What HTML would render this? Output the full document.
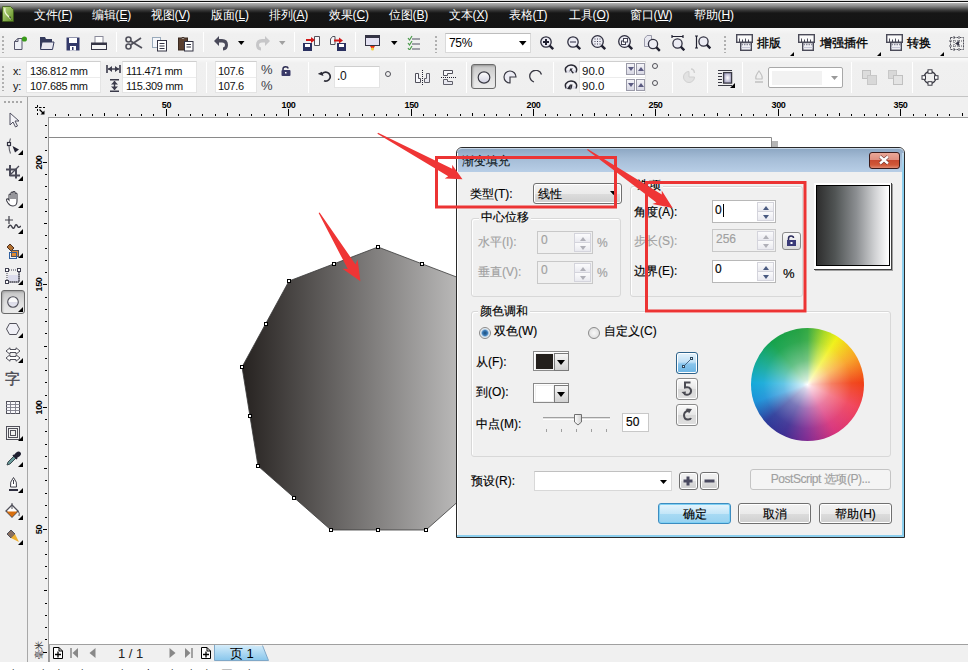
<!DOCTYPE html>
<html><head><meta charset="utf-8">
<style>
*{margin:0;padding:0;box-sizing:border-box}
html,body{width:968px;height:670px;overflow:hidden;background:#fff;font-family:"Liberation Sans",sans-serif;font-size:12px;color:#000}
.a{position:absolute}
#menubar{left:0;top:0;width:968px;height:28px;background:linear-gradient(#e0e0e0 0,#e0e0e0 1px,#101010 1px,#101010 2px,#f8f8f8 2px,#f8f8f8 3px,#b4b4b4 3px,#8a8a8a 6px,#3c3c3c 10px,#161616 13px,#141414 28px)}
.mi u{text-decoration:underline;text-underline-offset:1px}
.mi{top:8px;color:#fff;font-size:12px;line-height:14px;white-space:nowrap;letter-spacing:-0.2px}
#tb1{left:0;top:28px;width:968px;height:30px;background:linear-gradient(#f8f8f8,#f0f0f0 6px,#efefef);border-bottom:1px solid #d0d0d0}
#pb{left:0;top:58px;width:968px;height:39px;background:linear-gradient(#fafafa,#f0f0f0 5px,#efefef);border-bottom:1px solid #c4c4c4}
.sep{width:1px;background:#c8c8c8;border-right:1px solid #fff}
.inp{background:#fff;border:1px solid #e2e3e4;font-size:12px;line-height:14px;padding-left:3px;white-space:nowrap}
#toolbox{left:0;top:97px;width:28px;height:565px;background:#f0f0f0;border-right:1px solid #a8a8a8}
#hruler{left:28px;top:97px;width:940px;height:21px;background:#f0f0f0;background-image:linear-gradient(#9a9a9a,#9a9a9a);background-size:920px 1px;background-position:20px 20px;background-repeat:no-repeat}
#vruler{left:28px;top:118px;width:21px;height:544px;background:#f0f0f0;border-right:1px solid #9a9a9a}
#canvas{left:49px;top:118px;width:919px;height:527px;background:#fff}
#nav{left:49px;top:644px;width:919px;height:18px;background:#f0f0f0;border-top:1px solid #a0a0a0;border-left:1px solid #a0a0a0}
#dlg{left:456px;top:147px;width:449px;height:391px;border:1px solid #2a2a2a;border-radius:6px 6px 0 0;background:#f0f0f0;overflow:hidden}
.grip{width:2px;height:19px;background:repeating-linear-gradient(transparent 0,transparent 2px,#b0b0b0 2px,#b0b0b0 4px)}
.tbt{top:8px;font-size:12px;line-height:15px;white-space:nowrap;-webkit-text-stroke:0.35px #000}
.tri{top:24px;width:0;height:0;border-left:4px solid transparent;border-bottom:4px solid #000}
.pt{font-size:11px;line-height:13px;white-space:nowrap;color:#111;letter-spacing:-0.35px}
.ibox{background:#fff;border:1px solid #e4e4e4;border-top-color:#cfcfcf;background-image:linear-gradient(transparent 15px,#ececec 15px,#ececec 16px,transparent 16px)}
.deg{width:6px;height:6px;border:1.3px solid #505058;border-radius:50%}
.spb{width:9px;height:12px;border:1px solid #9a9aa8;background:linear-gradient(#f4f4f8,#d8d8e4)}
.spb i{position:absolute;left:1px;width:0;height:0;border-left:3.5px solid transparent;border-right:3.5px solid transparent}
.spb i.dn{top:3px;border-top:4px solid #5a5a80}
.spb i.up{top:3px;border-bottom:4px solid #5a5a80}
.tbtri{width:0;height:0;border-left:5px solid transparent;border-bottom:5px solid #000}
.dt{font-size:12px;line-height:15px;white-space:nowrap;color:#000;-webkit-text-stroke:0.15px currentColor}
.dis{color:#a0a0a0}
.gt{background:#f0f0f0;padding:0 2px}
.grp{border:1px solid #d8d8d8;border-radius:3px;box-shadow:inset 1px 1px 0 #fff}
.wbtn{border:1px solid #707070;border-radius:3px;background:linear-gradient(#f2f2f2,#ebebeb 50%,#dddddd 51%,#cfcfcf);box-shadow:inset 0 0 0 1px #fff}
.sp{background:#fff;border:1px solid #b8b8b8}
.sp.dsb{background:#f0f0f0;border-color:#c8c8c8}
.sbu,.sbd{right:1px;width:17px;height:10px;border:1px solid #d4d4dc;background:linear-gradient(#fbfbfc,#eaeaf0)}
.sbu{top:1px}.sbd{top:10px}
.sbu:after,.sbd:after{content:"";position:absolute;left:4.5px;top:2.5px;border-left:3.5px solid transparent;border-right:3.5px solid transparent}
.sbu:after{border-bottom:4px solid #4a5a80}
.sbd:after{border-top:4px solid #4a5a80}
.dsb .sbu:after{border-bottom-color:#b0b0b8}.dsb .sbd:after{border-top-color:#b0b0b8}
.radio{width:12px;height:12px;border-radius:50%;border:1px solid #8a8a8a;background:radial-gradient(#f8f8f8,#d8d8d8)}
.radio.on{background:radial-gradient(circle,#1e4e78 0,#3a7ab8 2.5px,#d4e4f0 4px,#f0f0f0 5px)}
.cbtn{width:36px;height:20px;border:1px solid #8a8a8a;background:#f0f0f0;box-shadow:inset 1px 1px 0 #fff}
.cbtn:after{content:"";position:absolute;left:20px;top:1px;width:13px;height:16px;border:1px solid #7a7a7a;background:linear-gradient(#f6f6f6,#d2d2d2)}
.cbtn:before{content:"";position:absolute;z-index:2;left:23px;top:8px;border-left:4px solid transparent;border-right:4px solid transparent;border-top:5px solid #000}
.ibt{width:22px;height:22px;border:1px solid #8a8a8a;border-radius:3px;background:linear-gradient(#fafafa,#e6e6e6 50%,#d8d8d8 51%,#e0e0e0);box-shadow:inset 0 0 0 1px #fff}
.ibt.sel{border-color:#2c628b;background:linear-gradient(#e4f2fb,#c0e0f6 45%,#88c4ec 55%,#6ab4e4)}
</style></head><body>
<div id="menubar" class="a">
  <svg class="a" style="left:2px;top:6px" width="12" height="16" viewBox="0 0 12 16"><defs><linearGradient id="lg" x1="0" y1="0" x2="1" y2="1"><stop offset="0" stop-color="#c4e08c"/><stop offset="1" stop-color="#5c8c20"/></linearGradient></defs><path d="M0.5 0.5H8.5L11.5 3.5V15.5H0.5Z" fill="url(#lg)" stroke="#3c5a18" stroke-width=".8"/><path d="M3 2Q2 6 5 9L9 13" fill="none" stroke="#eef6d8" stroke-width="1.4"/><path d="M7 11L10 14L8 10Z" fill="#203010"/></svg>
  <div class="a mi" style="left:34px">文件(<u>F</u>)</div>
  <div class="a mi" style="left:92px">编辑(<u>E</u>)</div>
  <div class="a mi" style="left:151px">视图(<u>V</u>)</div>
  <div class="a mi" style="left:211px">版面(<u>L</u>)</div>
  <div class="a mi" style="left:269px">排列(<u>A</u>)</div>
  <div class="a mi" style="left:329px">效果(<u>C</u>)</div>
  <div class="a mi" style="left:389px">位图(<u>B</u>)</div>
  <div class="a mi" style="left:449px">文本(<u>X</u>)</div>
  <div class="a mi" style="left:509px">表格(<u>T</u>)</div>
  <div class="a mi" style="left:569px">工具(<u>O</u>)</div>
  <div class="a mi" style="left:630px">窗口(<u>W</u>)</div>
  <div class="a mi" style="left:694px">帮助(<u>H</u>)</div>
</div>
<div id="tb1" class="a">
<div class="a grip" style="left:2px;top:6px"></div>
<svg class="a" style="left:12px;top:8px" width="16" height="15" viewBox="0 0 16 15"><path d="M2.5 5.5 L6 2.5 H10 V13.5 H2.5 Z" fill="#eef0f6" stroke="#55556a"/><path d="M2.5 5.5 H6 V2.5" fill="none" stroke="#55556a"/><circle cx="12.4" cy="3" r="2.6" fill="#3a9a1a"/></svg>
<svg class="a" style="left:39px;top:8px" width="16" height="15" viewBox="0 0 16 15"><path d="M1 1 H6 L7 3 H13 V13 H1 Z" fill="#343a5c"/><path d="M1.5 13.5 L3 6 H15 L13.5 13.5 Z" fill="#e8e8f0" stroke="#343a5c"/></svg>
<svg class="a" style="left:66px;top:9px" width="14" height="14" viewBox="0 0 14 14"><rect x="0.5" y="0.5" width="13" height="13" fill="#343a6a"/><rect x="3" y="1" width="8" height="5" fill="#fff"/><rect x="4" y="9" width="6" height="4.5" fill="#fff"/><rect x="6" y="10" width="1.5" height="3" fill="#343a6a"/></svg>
<svg class="a" style="left:91px;top:8px" width="16" height="15" viewBox="0 0 16 15"><rect x="4" y="0.5" width="8" height="7" fill="#fff" stroke="#8a8a9a"/><rect x="0.5" y="7" width="15" height="6.5" fill="#f4f4f4" stroke="#343444"/><rect x="1" y="7" width="14" height="2" fill="#343444"/></svg>
<div class="a sep" style="left:116px;top:4px;height:20px"></div>
<svg class="a" style="left:125px;top:8px" width="18" height="14" viewBox="0 0 18 14"><circle cx="3.5" cy="3.5" r="2.5" fill="none" stroke="#50505a" stroke-width="1.6"/><circle cx="3.5" cy="10.5" r="2.5" fill="none" stroke="#50505a" stroke-width="1.6"/><path d="M5.5 5 L17 12 M5.5 9 L16 2" stroke="#50505a" stroke-width="1.8"/></svg>
<svg class="a" style="left:152px;top:9px" width="16" height="15" viewBox="0 0 16 15"><rect x="0.5" y="0.5" width="8" height="10" fill="#f4f6fa" stroke="#9ab"/><rect x="5.5" y="3.5" width="9" height="10.5" fill="#fff" stroke="#343444"/><path d="M7.5 6.5H12.5M7.5 9H12.5M7.5 11.5H12.5" stroke="#343444"/></svg>
<svg class="a" style="left:178px;top:8px" width="16" height="16" viewBox="0 0 16 16"><rect x="0.5" y="2" width="9" height="12" fill="#5a4030" stroke="#3a2a20"/><path d="M3 2.5 Q5 0 7 2.5" fill="#fff" stroke="#3a2a20"/><rect x="6.5" y="5.5" width="8.5" height="9.5" fill="#fff" stroke="#343444"/><path d="M8.5 8.5H13M8.5 11H13" stroke="#343444"/></svg>
<div class="a sep" style="left:203px;top:4px;height:20px"></div>
<svg class="a" style="left:213px;top:7px" width="17" height="16" viewBox="0 0 17 16"><path d="M1 6 L6 1 V4 H9 Q15 4 15 10 Q15 15 10 15.5 L10 12.5 Q12 12 12 10 Q12 7.5 9 7.5 H6 V11 Z" fill="#4a4a5a"/></svg>
<svg class="a" style="left:238px;top:13px" width="7" height="5"><path d="M0 0H6.5L3.25 4Z" fill="#000"/></svg>
<svg class="a" style="left:254px;top:7px" width="17" height="16" viewBox="0 0 17 16"><path d="M16 6 L11 1 V4 H8 Q2 4 2 10 Q2 15 7 15.5 L7 12.5 Q5 12 5 10 Q5 7.5 8 7.5 H11 V11 Z" fill="#c6c6c8"/></svg>
<svg class="a" style="left:279px;top:13px" width="7" height="5"><path d="M0 0H6.5L3.25 4Z" fill="#a0a0a0"/></svg>
<div class="a sep" style="left:294px;top:4px;height:20px"></div>
<svg class="a" style="left:303px;top:7px" width="18" height="16" viewBox="0 0 18 16"><path d="M11.5 1.5 H16.5 V10.5 H11.5 Z" fill="#f6f6f8" stroke="#50505a"/><path d="M3 5 H10" stroke="#d01818" stroke-width="2"/><path d="M8 2 L12 5 L8 8Z" fill="#d01818"/><rect x="0" y="8" width="9" height="8" fill="#2a3060"/><rect x="2" y="9" width="5" height="3" fill="#fff"/></svg>
<svg class="a" style="left:329px;top:7px" width="18" height="16" viewBox="0 0 18 16"><path d="M3.5 1.5 L6 1.5 V9.5 H1.5 V4 Z" fill="#f6f6f8" stroke="#50505a"/><path d="M5 5.5 H12" stroke="#d01818" stroke-width="2"/><path d="M10 2.5 L14 5.5 L10 8.5Z" fill="#d01818"/><rect x="8" y="8" width="9" height="8" fill="#2a3060"/><rect x="10" y="9" width="5" height="3" fill="#fff"/></svg>
<div class="a sep" style="left:355px;top:4px;height:20px"></div>
<svg class="a" style="left:365px;top:7px" width="15" height="16" viewBox="0 0 15 16"><rect x="0.5" y="0.5" width="14" height="10" fill="#e4e2f2" stroke="#343444"/><rect x="0.5" y="0.5" width="14" height="2.5" fill="#343444"/><path d="M5 11 L7.5 15 L10 11Z" fill="#e83010"/><circle cx="7.5" cy="14" r="1.5" fill="#f0d040"/></svg>
<svg class="a" style="left:391px;top:13px" width="7" height="5"><path d="M0 0H6.5L3.25 4Z" fill="#000"/></svg>
<svg class="a" style="left:407px;top:7px" width="14" height="15" viewBox="0 0 14 15"><path d="M1 3 L2.5 5 L5 1 M1 8 L2.5 10 L5 6 M1 13 L2.5 15 L5 11" fill="none" stroke="#4a9a4a" stroke-width="1.2"/><path d="M5 4H13M5 9H13M5 14H13" stroke="#505060" stroke-width="1.2"/></svg>
<div class="a grip" style="left:435px;top:6px"></div>
<div class="a" style="left:445px;top:5px;width:86px;height:20px;background:#fff;border:1px solid #dadada;border-top-color:#bdbdbd"></div>
<div class="a" style="left:449px;top:8px;font-size:12px;line-height:14px;letter-spacing:-0.3px">75%</div>
<svg class="a" style="left:519px;top:13px" width="8" height="5"><path d="M0 0H7.5L3.75 4.5Z" fill="#000"/></svg>
<svg class="a" style="left:540px;top:8px" width="15" height="15"><circle cx="6" cy="6" r="5.2" fill="#ececf4" stroke="#303040" stroke-width="1.3"/><path d='M3 6H9M6 3V9' stroke='#202030' stroke-width='2'/><path d="M9.6 9.6L13.2 13.2" stroke="#202030" stroke-width="2.4"/></svg>
<svg class="a" style="left:567px;top:8px" width="15" height="15"><circle cx="6" cy="6" r="5.2" fill="#ececf4" stroke="#303040" stroke-width="1.3"/><path d='M3 6H9' stroke='#8a8a9a' stroke-width='2'/><path d="M9.6 9.6L13.2 13.2" stroke="#202030" stroke-width="2.4"/></svg>
<svg class="a" style="left:591px;top:7px" width="16" height="16"><circle cx="6.5" cy="6.5" r="5.8" fill="#ececf4" stroke="#303040" stroke-width="1.3"/><path d='M3.5 4H9.5M3.5 6.5H9.5M3.5 9H9.5' stroke='#404050' stroke-dasharray='1 1.5'/><path d="M10.6 10.6L14.2 14.2" stroke="#202030" stroke-width="2.4"/></svg>
<svg class="a" style="left:618px;top:7px" width="16" height="16"><circle cx="6.5" cy="6.5" r="5.8" fill="#ececf4" stroke="#303040" stroke-width="1.3"/><rect x='3.5' y='6' width='4' height='3.5' fill='#fff' stroke='#404050'/><rect x='5.5' y='3.5' width='4' height='3.5' fill='#fff' stroke='#404050'/><path d="M10.6 10.6L14.2 14.2" stroke="#202030" stroke-width="2.4"/></svg>
<svg class="a" style="left:644px;top:7px" width="17" height="17"><path d="M0.5 3.5L3 0.5H7.5V11.5H0.5Z" fill="#e8e8f0" stroke="#9a9aaa"/><circle cx="9" cy="9" r="4.6" fill="#ececf4" stroke="#303040" stroke-width="1.3"/><path d="M12.2 12.2L15.8 15.8" stroke="#202030" stroke-width="2.4"/></svg>
<svg class="a" style="left:671px;top:7px" width="15" height="16"><path d="M1 1.5H12M1 0V3M12 0V3" stroke="#202030" stroke-width="1.2"/><circle cx="6.5" cy="8.5" r="4.6" fill="#ececf4" stroke="#303040" stroke-width="1.3"/><path d="M9.7 11.7L13.3 15.3" stroke="#202030" stroke-width="2.4"/></svg>
<svg class="a" style="left:695px;top:7px" width="17" height="16"><path d="M1.5 1V13M0 1H3M0 13H3" stroke="#202030" stroke-width="1.2"/><circle cx="8.5" cy="6.5" r="4.6" fill="#ececf4" stroke="#303040" stroke-width="1.3"/><path d="M11.7 9.7L15.3 13.3" stroke="#202030" stroke-width="2.4"/></svg>
<div class="a grip" style="left:724px;top:6px"></div>
<svg class="a" style="left:736px;top:6px" width="17" height="17" viewBox="0 0 17 17"><rect x="0.7" y="0.7" width="15.6" height="7.6" fill="#fafafa" stroke="#4a4a58" stroke-width="1.4"/><path d="M3.5 8V4.5M6.5 8V5.5M9.5 8V4.5M12.5 8V5.5" stroke="#4a4a58"/><rect x="4.7" y="8.5" width="10.6" height="7.8" fill="#f0f0f4" stroke="#4a4a58" stroke-width="1.4"/><path d="M5.5 10.5H14.5" stroke="#8a8a9a" stroke-width="1.4" stroke-dasharray="1.5 1"/><path d="M5.5 13.5H14.5" stroke="#c8c8d8"/></svg>
<div class="a tbt" style="left:757px">排版</div>
<div class="a tri" style="left:790px"></div>
<svg class="a" style="left:798px;top:6px" width="17" height="17" viewBox="0 0 17 17"><rect x="0.7" y="0.7" width="15.6" height="7.6" fill="#fafafa" stroke="#4a4a58" stroke-width="1.4"/><path d="M3.5 8V4.5M6.5 8V5.5M9.5 8V4.5M12.5 8V5.5" stroke="#4a4a58"/><rect x="4.7" y="8.5" width="10.6" height="7.8" fill="#f0f0f4" stroke="#4a4a58" stroke-width="1.4"/><path d="M5.5 10.5H14.5" stroke="#8a8a9a" stroke-width="1.4" stroke-dasharray="1.5 1"/><path d="M5.5 13.5H14.5" stroke="#c8c8d8"/></svg>
<div class="a tbt" style="left:820px">增强插件</div>
<div class="a tri" style="left:877px"></div>
<svg class="a" style="left:886px;top:6px" width="17" height="17" viewBox="0 0 17 17"><rect x="0.7" y="0.7" width="15.6" height="7.6" fill="#fafafa" stroke="#4a4a58" stroke-width="1.4"/><path d="M3.5 8V4.5M6.5 8V5.5M9.5 8V4.5M12.5 8V5.5" stroke="#4a4a58"/><rect x="4.7" y="8.5" width="10.6" height="7.8" fill="#f0f0f4" stroke="#4a4a58" stroke-width="1.4"/><path d="M5.5 10.5H14.5" stroke="#8a8a9a" stroke-width="1.4" stroke-dasharray="1.5 1"/><path d="M5.5 13.5H14.5" stroke="#c8c8d8"/></svg>
<div class="a tbt" style="left:907px">转换</div>
<div class="a tri" style="left:940px"></div>
<svg class="a" style="left:949px;top:8px" width="16" height="15" viewBox="0 0 16 15"><rect x="1.5" y="1.5" width="13" height="12" fill="none" stroke="#50505a" stroke-dasharray="2 1"/><path d="M0 5H16M0 10H16M5 0V15M10 0V15" stroke="#50505a" stroke-dasharray="1 1"/><path d="M10 5L6 7.5L10 10Z" fill="#343444"/></svg>
</div>
<div id="pb" class="a">
<div class="a grip" style="left:2px;top:6px;height:27px"></div>
<div class="a pt" style="left:13px;top:7px">x:</div>
<div class="a pt" style="left:13px;top:22px">y:</div>
<div class="a ibox" style="left:26px;top:3px;width:75px;height:32px"></div>
<div class="a pt" style="left:30px;top:7px">136.812 mm</div>
<div class="a pt" style="left:30px;top:22px">107.685 mm</div>
<svg class="a" style="left:106px;top:7px" width="15" height="8" viewBox="0 0 15 8"><path d="M1 0V8M14 0V8" stroke="#3a3a4a" stroke-width="1.6"/><path d="M2 4H13" stroke="#3a3a4a" stroke-width="1.4"/><path d="M2 4L6 1V7Z M13 4L9 1V7Z" fill="#3a3a4a"/></svg>
<svg class="a" style="left:110px;top:21px" width="9" height="13" viewBox="0 0 9 13"><path d="M0 0.8H9M0 12.2H9" stroke="#3a3a4a" stroke-width="1.4"/><path d="M4.5 2V11" stroke="#3a3a4a" stroke-width="1.4"/><path d="M4.5 2L1 5.5H8Z M4.5 11L1 7.5H8Z" fill="#3a3a4a"/></svg>
<div class="a ibox" style="left:122px;top:3px;width:75px;height:32px"></div>
<div class="a pt" style="left:126px;top:7px">111.471 mm</div>
<div class="a pt" style="left:126px;top:22px">115.309 mm</div>
<div class="a sep" style="left:206px;top:4px;height:31px"></div>
<div class="a ibox" style="left:215px;top:3px;width:42px;height:32px"></div>
<div class="a pt" style="left:218px;top:7px">107.6</div>
<div class="a pt" style="left:218px;top:22px">107.6</div>
<div class="a pt" style="left:261px;top:5px;font-size:13px;color:#404048">%</div>
<div class="a pt" style="left:261px;top:21px;font-size:13px;color:#404048">%</div>
<svg class="a" style="left:281px;top:8px" width="10" height="10" viewBox="0 0 10 10"><path d="M2 4V3Q2 0.8 4.5 0.8Q7 0.8 7 2.5" fill="none" stroke="#2a2a50" stroke-width="1.5"/><rect x="0.5" y="4" width="9" height="6" rx="1" fill="#3a3a68"/><rect x="4" y="6" width="1.5" height="1.5" fill="#fff"/></svg>
<div class="a sep" style="left:308px;top:4px;height:31px"></div>
<svg class="a" style="left:318px;top:13px" width="14" height="11" viewBox="0 0 14 11"><path d="M3.5 4A4.5 4.5 0 1 1 6 9.8" fill="none" stroke="#2a2a34" stroke-width="1.7"/><path d="M0 4H6L3 0.5Z" fill="#2a2a34" transform="rotate(20 3 3)"/></svg>
<div class="a ibox" style="left:334px;top:8px;width:46px;height:22px;background-image:none"></div>
<div class="a pt" style="left:337px;top:12px;font-size:12px">.0</div>
<div class="a deg" style="left:385px;top:13px"></div>
<div class="a sep" style="left:405px;top:4px;height:31px"></div>
<svg class="a" style="left:413px;top:11px" width="18" height="16" viewBox="0 0 18 16"><path d="M2.5 4.5H5.5V9.5H7.5V13.5H2.5Z" fill="#f8f8fc" stroke="#50505a"/><path d="M16.5 4.5H13.5V9.5H11.5V13.5H16.5Z" fill="#e8e8f0" stroke="#60606a"/><path d="M9.5 1V16" stroke="#202030" stroke-dasharray="1 1"/></svg>
<svg class="a" style="left:441px;top:12px" width="16" height="15" viewBox="0 0 16 15"><path d="M2.5 0.5H11.5V3.5H6.5V5.5H2.5Z" fill="#f8f8fc" stroke="#50505a"/><path d="M2.5 9.5H6.5V11.5H11.5V14.5H2.5Z" fill="#e8e8f0" stroke="#60606a"/><path d="M0 7.5H16" stroke="#202030" stroke-dasharray="1 1"/></svg>
<div class="a sep" style="left:466px;top:4px;height:31px"></div>
<div class="a" style="left:471px;top:6px;width:25px;height:25px;border:1px solid #6a6a6a;border-radius:3px;background:linear-gradient(#c6c6c6,#e2e2e2 60%,#ececec);box-shadow:inset 1px 1px 2px rgba(0,0,0,.25)"></div>
<svg class="a" style="left:477px;top:13px" width="14" height="13" viewBox="0 0 14 13"><ellipse cx="7" cy="6.5" rx="5.8" ry="5.6" fill="url(#eg)" stroke="#3a3a44" stroke-width="1.2"/><defs><linearGradient id="eg" x1="0" y1="0" x2="0" y2="1"><stop offset="0" stop-color="#fff"/><stop offset="1" stop-color="#d0d0e0"/></linearGradient></defs></svg>
<svg class="a" style="left:503px;top:12px" width="14" height="14" viewBox="0 0 14 14"><path d="M7 7H13A6 6 0 1 0 7 13Z" fill="#ececf4" stroke="#3a3a44" stroke-width="1.2"/></svg>
<svg class="a" style="left:529px;top:12px" width="14" height="13" viewBox="0 0 14 13"><path d="M12.5 4.5A6 6 0 1 0 5 12" fill="none" stroke="#3a3a44" stroke-width="1.3"/></svg>
<div class="a sep" style="left:553px;top:4px;height:31px"></div>
<svg class="a" style="left:564px;top:6px" width="14" height="10" viewBox="0 0 14 10"><path d="M2.5 8.5Q0.5 5.5 2 3.5Q4 1 7 1Q10.5 1 12 3.5Q13.5 6 11.5 8.5" fill="#f4f4f8" stroke="#2a2a34" stroke-width="1.5"/><path d="M2 6H12V9H2Z" fill="#c8c8d8" opacity=".5"/><path d="M6 4.5L9 4.5L7.5 6L10 9L8.5 9.5L6.5 6.5L5.5 8Z" fill="#2a2a34"/></svg>
<svg class="a" style="left:564px;top:22px" width="14" height="10" viewBox="0 0 14 10"><path d="M2.5 8.5Q0.5 5.5 2 3.5Q4 1 7 1Q10.5 1 12 3.5Q13.5 6 11.5 8.5" fill="#f4f4f8" stroke="#2a2a34" stroke-width="1.5"/><path d="M2 6H12V9H2Z" fill="#c8c8d8" opacity=".5"/><path d="M3 9L6 4.5L7 9.5Z M6 4.5H8.5L7.5 9.5Z" fill="#2a2a34"/></svg>
<div class="a ibox" style="left:579px;top:3px;width:67px;height:32px"></div>
<div class="a pt" style="left:582px;top:7px;font-size:11.5px;letter-spacing:0">90.0</div>
<div class="a pt" style="left:582px;top:22px;font-size:11.5px;letter-spacing:0">90.0</div>
<div class="a spb" style="left:626px;top:5px"><i class="dn"></i></div>
<div class="a spb" style="left:636px;top:5px"><i class="up"></i></div>
<div class="a spb" style="left:626px;top:21px"><i class="dn"></i></div>
<div class="a spb" style="left:636px;top:21px"><i class="up"></i></div>
<div class="a deg" style="left:652px;top:5px"></div>
<div class="a deg" style="left:652px;top:22px"></div>
<div class="a sep" style="left:672px;top:4px;height:31px"></div>
<svg class="a" style="left:683px;top:10px" width="14" height="15" viewBox="0 0 14 15"><path d="M6 3.5A5.5 5.5 0 1 0 11.5 9H6Z" fill="#e2e2e2" stroke="#d0d0d0"/><path d="M8 1Q11 1 11.5 5" fill="none" stroke="#d0d0d0" stroke-width="1.4"/></svg>
<div class="a sep" style="left:707px;top:4px;height:31px"></div>
<svg class="a" style="left:717px;top:11px" width="20" height="19" viewBox="0 0 20 19"><defs><radialGradient id="wg"><stop offset="0" stop-color="#fff"/><stop offset="1" stop-color="#a8a6c4"/></radialGradient></defs><path d="M1 1.5H15M1 4.5H5M1 7.5H5M1 10.5H5M1 13.5H5M1 16.5H15" stroke="#3a3a44" stroke-width="1.1"/><rect x="6.6" y="3.6" width="8" height="10.5" fill="url(#wg)" stroke="#3a3a44" stroke-width="1.3"/><path d="M13 19L18 14V19Z" fill="#000"/></svg>
<div class="a sep" style="left:742px;top:4px;height:31px"></div>
<svg class="a" style="left:754px;top:12px" width="10" height="13" viewBox="0 0 10 13"><path d="M5 1Q1 6 2 9H8Q9 6 5 1Z" fill="none" stroke="#c0c0c0" stroke-width="1.2"/><path d="M1 12H9" stroke="#c0c0c0" stroke-width="1.5"/></svg>
<div class="a" style="left:768px;top:9px;width:75px;height:21px;border:1px solid #a8a8a8;border-radius:2px;background:#fff"></div>
<div class="a" style="left:772px;top:13px;width:50px;height:14px;background:#f2f2f2"></div>
<svg class="a" style="left:831px;top:18px" width="8" height="5"><path d="M0 0H7L3.5 4Z" fill="#9a9a9a"/></svg>
<div class="a sep" style="left:851px;top:4px;height:31px"></div>
<svg class="a" style="left:862px;top:12px" width="15" height="15" viewBox="0 0 15 15"><rect x="0.5" y="0.5" width="8" height="8" fill="#dcdcdc" stroke="#c0c0c0"/><rect x="5.5" y="5.5" width="9" height="9" fill="#d8d8d8" stroke="#c8c8c8"/></svg>
<svg class="a" style="left:888px;top:12px" width="15" height="15" viewBox="0 0 15 15"><rect x="0.5" y="0.5" width="8" height="8" fill="#d8d8d8" stroke="#c8c8c8"/><rect x="5.5" y="5.5" width="9" height="9" fill="#e4e4e4" stroke="#c0c0c0"/></svg>
<div class="a sep" style="left:912px;top:4px;height:31px"></div>
<svg class="a" style="left:921px;top:11px" width="18" height="17" viewBox="0 0 18 17"><circle cx="9" cy="8.5" r="6" fill="none" stroke="#3a3a44" stroke-width="1.3"/><rect x="7" y="0.8" width="4" height="3.5" fill="#fff" stroke="#3a3a44"/><rect x="7" y="12.7" width="4" height="3.5" fill="#fff" stroke="#3a3a44"/><rect x="1" y="6.7" width="3.5" height="3.6" fill="#fff" stroke="#3a3a44"/><rect x="13.5" y="6.7" width="3.5" height="3.6" fill="#fff" stroke="#3a3a44"/></svg>
</div>
<div id="toolbox" class="a"><div class="a" style="left:4px;top:4px;width:18px;height:2px;background:repeating-linear-gradient(90deg,#a8a8a8 0,#a8a8a8 2px,transparent 2px,transparent 4px)"></div>
<svg class="a" style="left:9px;top:15px" width="10" height="16" viewBox="0 0 10 16"><path d="M1 1V13L4 10L6.5 15L8.5 14L6 9H10Z" fill="#f4f4f8" stroke="#505060" stroke-linejoin="round"/></svg>
<svg class="a" style="left:6px;top:41px" width="14" height="17" viewBox="0 0 14 17"><path d="M4.5 0.5Q1.5 8 4.5 15.5" fill="none" stroke="#60606a" stroke-width="1.1"/><rect x="1.5" y="4.5" width="3" height="3" fill="#fff" stroke="#303040" stroke-width="1.2"/><path d="M6.5 8L13 11.5L9 14.5Z" fill="#202030"/></svg>
<div class="a tbtri" style="left:18px;top:53px"></div>
<svg class="a" style="left:5px;top:68px" width="16" height="14" viewBox="0 0 16 14"><path d="M1 4.5H12M11 4V13.5M5 0V11M4.5 10.5H15" fill="none" stroke="#4a4a58" stroke-width="2"/><path d="M5.5 9.5L14 1" stroke="#4a4a58" stroke-width="1.3"/></svg>
<div class="a tbtri" style="left:18px;top:79px"></div>
<svg class="a" style="left:6px;top:94px" width="14" height="16" viewBox="0 0 14 16"><path d="M3 9V4Q3 3 4 3Q5 3 5 4V8V2Q5 1 6 1Q7 1 7 2V8V1.5Q7 0.5 8 0.5Q9 0.5 9 1.5V8V3Q9 2 10 2Q11 2 11 3V10Q11 15 7 15Q4 15 2 12L0.5 9.5Q0 8.5 1 8Q2 7.5 3 9Z" fill="#fff" stroke="#40404a" stroke-width="1.1"/></svg>
<div class="a tbtri" style="left:18px;top:106px"></div>
<svg class="a" style="left:5px;top:119px" width="16" height="14" viewBox="0 0 16 14"><path d="M4 0V8M0 4H8" stroke="#40404a" stroke-width="1.2"/><path d="M3 12Q5 7 7 11Q9 14 10 10Q11 7 13 11Q14 12 16 10" fill="none" stroke="#40404a" stroke-width="1.4"/></svg>
<div class="a tbtri" style="left:18px;top:131.5px"></div>
<svg class="a" style="left:5px;top:145px" width="16" height="17" viewBox="0 0 16 17"><path d="M2 5L5 2L9 6L6 9Z" fill="#b07030" stroke="#503020"/><rect x="6.5" y="8.5" width="7" height="6" fill="#e08a30" stroke="#50505a"/><rect x="4.5" y="10.5" width="7" height="6" fill="none" stroke="#3060a0"/></svg>
<div class="a tbtri" style="left:18px;top:156px"></div>
<svg class="a" style="left:5px;top:171px" width="16" height="16" viewBox="0 0 16 16"><rect x="2" y="2" width="12" height="12" fill="none" stroke="#404050" stroke-dasharray="1 1"/><path d="M14 2V14H2" fill="none" stroke="#404050"/><rect x="3" y="7" width="10" height="6" fill="#dcdcec"/><rect x="0.5" y="0.5" width="3" height="3" fill="#fff" stroke="#404050"/><rect x="12.5" y="0.5" width="3" height="3" fill="#fff" stroke="#404050"/><rect x="0.5" y="12.5" width="3" height="3" fill="#fff" stroke="#404050"/></svg>
<div class="a tbtri" style="left:18px;top:183px"></div>
<div class="a" style="left:1px;top:193px;width:24px;height:24px;border:1px solid #6a6a6a;border-radius:3px;background:linear-gradient(#c4c4c4,#e0e0e0 55%,#ebebeb);box-shadow:inset 1px 1px 2px rgba(0,0,0,.2)"></div>
<svg class="a" style="left:7px;top:199px" width="12" height="12" viewBox="0 0 12 12"><defs><linearGradient id="tg" x1="0" y1="0" x2="0" y2="1"><stop offset=".45" stop-color="#fafafa"/><stop offset=".55" stop-color="#dcdce8"/><stop offset="1" stop-color="#e8e8f0"/></linearGradient></defs><circle cx="6" cy="6" r="5.3" fill="url(#tg)" stroke="#50505a" stroke-width="1.1"/></svg>
<div class="a tbtri" style="left:18px;top:210px"></div>
<svg class="a" style="left:6px;top:226px" width="14" height="12" viewBox="0 0 14 12"><path d="M3.5 0.5H10.5L13.5 6L10.5 11.5H3.5L0.5 6Z" fill="#f0f0f6" stroke="#50505a"/></svg>
<div class="a tbtri" style="left:18px;top:236px"></div>
<svg class="a" style="left:5px;top:250px" width="16" height="15" viewBox="0 0 16 15"><path d="M1 4L5 0.8V2.5H11V0.8L15 4L11 7.2V5.5H5V7.2Z" fill="#fff" stroke="#50505a"/><path d="M1 11L5 7.8V9.5H11V7.8L15 11L11 14.2V12.5H5V14.2Z" fill="#fff" stroke="#50505a"/></svg>
<div class="a tbtri" style="left:18px;top:261px"></div>
<div class="a" style="left:5px;top:274px;font-size:15px;line-height:16px;color:#4a4a52;-webkit-text-stroke:0.4px #4a4a52">字</div>
<svg class="a" style="left:6px;top:304px" width="14" height="13" viewBox="0 0 14 13"><rect x="0.5" y="0.5" width="13" height="12" fill="#f8f8fc" stroke="#50505a"/><path d="M0 3.5H14M0 6.5H14M0 9.5H14M4.5 0V13M9.5 0V13" stroke="#7a7a88" stroke-width=".9"/></svg>
<svg class="a" style="left:6px;top:329px" width="14" height="14" viewBox="0 0 14 14"><rect x="0.5" y="0.5" width="13" height="13" fill="none" stroke="#50505a"/><rect x="2.5" y="2.5" width="9" height="9" fill="none" stroke="#50505a"/><rect x="4.5" y="4.5" width="5" height="5" fill="none" stroke="#50505a"/></svg>
<div class="a tbtri" style="left:18px;top:339px"></div>
<svg class="a" style="left:6px;top:354px" width="15" height="15" viewBox="0 0 15 15"><path d="M1 14L2 11L8 5L10 7L4 13Z" fill="#6a9a9a" stroke="#3a4a50"/><path d="M7 4L11 8M9 4Q12 0 14 2Q15 4 11 6Z" fill="#202030" stroke="#202030" stroke-width="1.6"/></svg>
<div class="a tbtri" style="left:18px;top:365px"></div>
<svg class="a" style="left:9px;top:380px" width="9" height="14" viewBox="0 0 9 14"><path d="M4.5 0.5Q0.5 5 1.5 10H7.5Q8.5 5 4.5 0.5Z" fill="#fff" stroke="#40404a"/><path d="M4.5 3V7" stroke="#40404a"/><path d="M0 13H9" stroke="#303040" stroke-width="2"/></svg>
<div class="a tbtri" style="left:18px;top:391px"></div>
<svg class="a" style="left:5px;top:406px" width="16" height="16" viewBox="0 0 16 16"><path d="M1 8L7 2L13 8L7 14Z" fill="#fff" stroke="#50505a" stroke-width="1.3"/><path d="M1.5 8.5H12.5L7 14Z" fill="#d87010"/><path d="M7 0V6" stroke="#50505a"/><path d="M13 8Q15 10 14 13" fill="none" stroke="#50505a"/></svg>
<div class="a tbtri" style="left:18px;top:418px"></div>
<svg class="a" style="left:6px;top:432px" width="14" height="15" viewBox="0 0 14 15"><path d="M1 5L5 1L9 5L5 9Z" fill="#8a7060" stroke="#50505a"/><path d="M5 9L13 13L9 5Z" fill="#f0b030"/></svg>
<div class="a tbtri" style="left:18px;top:443px"></div></div>
<div id="hruler" class="a"><svg class="a" style="left:0;top:0" width="940" height="20" font-family="Liberation Sans" font-size="9" font-weight="bold" letter-spacing="-0.3"><path d="M27.5 17V19" stroke="#000"/><path d="M40.5 17V19" stroke="#000"/><path d="M52.5 17V19" stroke="#000"/><path d="M64.5 17V19" stroke="#000"/><path d="M76.5 16V19" stroke="#000"/><path d="M89.5 17V19" stroke="#000"/><path d="M101.5 17V19" stroke="#000"/><path d="M113.5 17V19" stroke="#000"/><path d="M125.5 17V19" stroke="#000"/><path d="M138.5 12V19" stroke="#000"/><text x="138.5" y="10.6" text-anchor="middle">50</text><path d="M150.5 17V19" stroke="#000"/><path d="M162.5 17V19" stroke="#000"/><path d="M174.5 17V19" stroke="#000"/><path d="M187.5 17V19" stroke="#000"/><path d="M199.5 16V19" stroke="#000"/><path d="M211.5 17V19" stroke="#000"/><path d="M223.5 17V19" stroke="#000"/><path d="M236.5 17V19" stroke="#000"/><path d="M248.5 17V19" stroke="#000"/><path d="M260.5 12V19" stroke="#000"/><text x="260.5" y="10.6" text-anchor="middle">100</text><path d="M272.5 17V19" stroke="#000"/><path d="M285.5 17V19" stroke="#000"/><path d="M297.5 17V19" stroke="#000"/><path d="M309.5 17V19" stroke="#000"/><path d="M321.5 16V19" stroke="#000"/><path d="M334.5 17V19" stroke="#000"/><path d="M346.5 17V19" stroke="#000"/><path d="M358.5 17V19" stroke="#000"/><path d="M370.5 17V19" stroke="#000"/><path d="M383.5 12V19" stroke="#000"/><text x="383.5" y="10.6" text-anchor="middle">150</text><path d="M395.5 17V19" stroke="#000"/><path d="M407.5 17V19" stroke="#000"/><path d="M419.5 17V19" stroke="#000"/><path d="M432.5 17V19" stroke="#000"/><path d="M444.5 16V19" stroke="#000"/><path d="M456.5 17V19" stroke="#000"/><path d="M468.5 17V19" stroke="#000"/><path d="M481.5 17V19" stroke="#000"/><path d="M493.5 17V19" stroke="#000"/><path d="M505.5 12V19" stroke="#000"/><text x="505.5" y="10.6" text-anchor="middle">200</text><path d="M517.5 17V19" stroke="#000"/><path d="M529.5 17V19" stroke="#000"/><path d="M542.5 17V19" stroke="#000"/><path d="M554.5 17V19" stroke="#000"/><path d="M566.5 16V19" stroke="#000"/><path d="M578.5 17V19" stroke="#000"/><path d="M591.5 17V19" stroke="#000"/><path d="M603.5 17V19" stroke="#000"/><path d="M615.5 17V19" stroke="#000"/><path d="M627.5 12V19" stroke="#000"/><text x="627.5" y="10.6" text-anchor="middle">250</text><path d="M640.5 17V19" stroke="#000"/><path d="M652.5 17V19" stroke="#000"/><path d="M664.5 17V19" stroke="#000"/><path d="M676.5 17V19" stroke="#000"/><path d="M689.5 16V19" stroke="#000"/><path d="M701.5 17V19" stroke="#000"/><path d="M713.5 17V19" stroke="#000"/><path d="M725.5 17V19" stroke="#000"/><path d="M738.5 17V19" stroke="#000"/><path d="M750.5 12V19" stroke="#000"/><text x="750.5" y="10.6" text-anchor="middle">300</text><path d="M762.5 17V19" stroke="#000"/><path d="M774.5 17V19" stroke="#000"/><path d="M787.5 17V19" stroke="#000"/><path d="M799.5 17V19" stroke="#000"/><path d="M811.5 16V19" stroke="#000"/><path d="M823.5 17V19" stroke="#000"/><path d="M836.5 17V19" stroke="#000"/><path d="M848.5 17V19" stroke="#000"/><path d="M860.5 17V19" stroke="#000"/><path d="M872.5 12V19" stroke="#000"/><text x="872.5" y="10.6" text-anchor="middle">350</text><path d="M885.5 17V19" stroke="#000"/><path d="M897.5 17V19" stroke="#000"/><path d="M909.5 17V19" stroke="#000"/><path d="M921.5 17V19" stroke="#000"/><path d="M934.5 16V19" stroke="#000"/><g stroke="#000" fill="none"><path d="M7 10.5H17" stroke-dasharray="2.5 1.5"/><path d="M9.5 8V18" stroke-dasharray="2 2"/><path d="M11.5 12.5L15 16" stroke-width="1.3"/></g><path d="M16.5 13.5V17.5H12.5Z" fill="#000"/></svg></div>
<div id="vruler" class="a"><svg class="a" style="left:0;top:0" width="20" height="544" font-family="Liberation Sans" font-size="9" font-weight="bold" letter-spacing="-0.3"><path d="M15 534.5H19" stroke="#000"/><path d="M17 521.5H19" stroke="#000"/><path d="M17 509.5H19" stroke="#000"/><path d="M17 497.5H19" stroke="#000"/><path d="M17 485.5H19" stroke="#000"/><path d="M16 472.5H19" stroke="#000"/><path d="M17 460.5H19" stroke="#000"/><path d="M17 448.5H19" stroke="#000"/><path d="M17 436.5H19" stroke="#000"/><path d="M17 423.5H19" stroke="#000"/><path d="M15 411.5H19" stroke="#000"/><text transform="translate(13.6 411.5) rotate(-90)" text-anchor="middle">50</text><path d="M17 399.5H19" stroke="#000"/><path d="M17 387.5H19" stroke="#000"/><path d="M17 375.5H19" stroke="#000"/><path d="M17 362.5H19" stroke="#000"/><path d="M16 350.5H19" stroke="#000"/><path d="M17 338.5H19" stroke="#000"/><path d="M17 326.5H19" stroke="#000"/><path d="M17 313.5H19" stroke="#000"/><path d="M17 301.5H19" stroke="#000"/><path d="M15 289.5H19" stroke="#000"/><text transform="translate(13.6 289.5) rotate(-90)" text-anchor="middle">100</text><path d="M17 277.5H19" stroke="#000"/><path d="M17 264.5H19" stroke="#000"/><path d="M17 252.5H19" stroke="#000"/><path d="M17 240.5H19" stroke="#000"/><path d="M16 228.5H19" stroke="#000"/><path d="M17 215.5H19" stroke="#000"/><path d="M17 203.5H19" stroke="#000"/><path d="M17 191.5H19" stroke="#000"/><path d="M17 179.5H19" stroke="#000"/><path d="M15 166.5H19" stroke="#000"/><text transform="translate(13.6 166.5) rotate(-90)" text-anchor="middle">150</text><path d="M17 154.5H19" stroke="#000"/><path d="M17 142.5H19" stroke="#000"/><path d="M17 130.5H19" stroke="#000"/><path d="M17 117.5H19" stroke="#000"/><path d="M16 105.5H19" stroke="#000"/><path d="M17 93.5H19" stroke="#000"/><path d="M17 81.5H19" stroke="#000"/><path d="M17 68.5H19" stroke="#000"/><path d="M17 56.5H19" stroke="#000"/><path d="M15 44.5H19" stroke="#000"/><text transform="translate(13.6 44.5) rotate(-90)" text-anchor="middle">200</text><path d="M17 32.5H19" stroke="#000"/><path d="M17 19.5H19" stroke="#000"/><path d="M17 7.5H19" stroke="#000"/></svg><div class="a" style="left:6px;top:541px;font-size:9px;line-height:10px;transform:rotate(-90deg);transform-origin:0 0;white-space:nowrap;color:#333">毫米</div></div>
<div id="canvas" class="a">
<svg class="a" style="left:0;top:0" width="919" height="527">
<defs><linearGradient id="pg" gradientUnits="userSpaceOnUse" x1="193" y1="0" x2="465" y2="0"><stop offset="0" stop-color="#262220"/><stop offset="1" stop-color="#e0e0e0"/></linearGradient></defs>
<path d="M0 19.5H722.5V30" fill="none" stroke="#8a8a8a"/>
<rect x="723" y="23" width="6" height="8" fill="#b4b4b4"/>
<polygon points="329,129 240,163 193,249 209,348 282,412 377,412 449,348 465,249 418,163" fill="url(#pg)" stroke="#3a3a3a" stroke-width="0.8"/>
<rect x="327.5" y="127.5" width="3" height="3" fill="#fff" stroke="#000"/><rect x="283.5" y="144.5" width="3" height="3" fill="#fff" stroke="#000"/><rect x="238.5" y="161.5" width="3" height="3" fill="#fff" stroke="#000"/><rect x="215.5" y="204.5" width="3" height="3" fill="#fff" stroke="#000"/><rect x="191.5" y="247.5" width="3" height="3" fill="#fff" stroke="#000"/><rect x="199.5" y="296.5" width="3" height="3" fill="#fff" stroke="#000"/><rect x="207.5" y="346.5" width="3" height="3" fill="#fff" stroke="#000"/><rect x="243.5" y="378.5" width="3" height="3" fill="#fff" stroke="#000"/><rect x="280.5" y="410.5" width="3" height="3" fill="#fff" stroke="#000"/><rect x="327.5" y="410.5" width="3" height="3" fill="#fff" stroke="#000"/><rect x="375.5" y="410.5" width="3" height="3" fill="#fff" stroke="#000"/><rect x="411.5" y="378.5" width="3" height="3" fill="#fff" stroke="#000"/><rect x="447.5" y="346.5" width="3" height="3" fill="#fff" stroke="#000"/><rect x="455.5" y="296.5" width="3" height="3" fill="#fff" stroke="#000"/><rect x="463.5" y="247.5" width="3" height="3" fill="#fff" stroke="#000"/><rect x="439.5" y="204.5" width="3" height="3" fill="#fff" stroke="#000"/><rect x="416.5" y="161.5" width="3" height="3" fill="#fff" stroke="#000"/><rect x="371.5" y="144.5" width="3" height="3" fill="#fff" stroke="#000"/>
</svg>
</div>
<div id="nav" class="a">
<svg class="a" style="left:3px;top:2px" width="10" height="12" viewBox="0 0 10 12"><path d="M0.5 0.5H6L9.5 4V11.5H0.5Z" fill="#fff" stroke="#000"/><path d="M6 0.5V4H9.5" fill="none" stroke="#000"/><path d="M5 4.5V10.5M2 7.5H8" stroke="#000" stroke-width="1.3"/></svg>
<svg class="a" style="left:20px;top:3px" width="9" height="10" viewBox="0 0 9 10"><path d="M1 0V10" stroke="#888" stroke-width="1.5"/><path d="M8 0V10L2.5 5Z" fill="#888"/></svg>
<svg class="a" style="left:39px;top:3px" width="7" height="10" viewBox="0 0 7 10"><path d="M6.5 0V10L0.5 5Z" fill="#888"/></svg>
<div class="a" style="left:68px;top:1px;font-size:13px;line-height:15px;color:#222;white-space:nowrap">1 / 1</div>
<svg class="a" style="left:119px;top:3px" width="7" height="10" viewBox="0 0 7 10"><path d="M0.5 0V10L6.5 5Z" fill="#888"/></svg>
<svg class="a" style="left:134px;top:3px" width="9" height="10" viewBox="0 0 9 10"><path d="M8 0V10" stroke="#888" stroke-width="1.5"/><path d="M1 0V10L6.5 5Z" fill="#888"/></svg>
<svg class="a" style="left:151px;top:2px" width="10" height="12" viewBox="0 0 10 12"><path d="M0.5 0.5H6L9.5 4V11.5H0.5Z" fill="#fff" stroke="#000"/><path d="M6 0.5V4H9.5" fill="none" stroke="#000"/><path d="M5 4.5V10.5M2 7.5H8" stroke="#000" stroke-width="1.3"/></svg>
<svg class="a" style="left:164px;top:0" width="56" height="16" viewBox="0 0 56 16"><defs><linearGradient id="tabg" x1="0" y1="0" x2="0" y2="1"><stop offset="0" stop-color="#d4ecfa"/><stop offset="1" stop-color="#88c6ec"/></linearGradient></defs><path d="M0.5 0V15.5H54.5L48.5 0.5" fill="url(#tabg)" stroke="#80a8c8"/></svg>
<div class="a" style="left:180px;top:1px;font-size:13px;line-height:15px;white-space:nowrap">页 1</div>
</div>
<div class="a" style="left:0;top:662px;width:968px;height:8px;background:#fff;overflow:hidden"><div class="a" style="left:4px;top:6px;font-size:12px;line-height:14px;white-space:nowrap;letter-spacing:2px">对 :   对 上   对 ...   对 :   点 对 对 击 图 对</div></div>

<div id="dlg" class="a"></div>
<div class="a" style="left:457px;top:148px;width:447px;height:24px;background:linear-gradient(#8ea8c4,#a4bcd6 40%,#b8cee6);border-top:1px solid #c8d8e8;border-radius:5px 5px 0 0"></div>
<div class="a" style="left:457px;top:153px;width:1px;height:384px;background:#fff"></div>
<div class="a" style="left:902px;top:153px;width:2px;height:384px;background:linear-gradient(#c0d8ec,#8ccfee 20px)"></div>
<div class="a" style="left:457px;top:535px;width:447px;height:2px;background:#8ccfee"></div>
<div class="a dt" style="left:462px;top:154px;color:#101820">渐变填充</div>
<div class="a" style="left:869px;top:152px;width:31px;height:17px;border:1px solid #3a1a1a;border-radius:3px;background:linear-gradient(#eaa898 0,#e09080 45%,#c84a30 50%,#d05838 80%,#e08870)"></div>
<svg class="a" style="left:878px;top:155px" width="12" height="10" viewBox="0 0 12 10"><path d="M2 1.5L10 8.5M10 1.5L2 8.5" stroke="#5a2020" stroke-width="3.6"/><path d="M2 1.5L10 8.5M10 1.5L2 8.5" stroke="#fff" stroke-width="2.4"/></svg>

<div class="a dt" style="left:470px;top:187px">类型(T):</div>
<div class="a wbtn" style="left:533px;top:183px;width:89px;height:21px"></div>
<div class="a dt" style="left:538px;top:187px">线性</div>
<svg class="a" style="left:610px;top:191px" width="8" height="5"><path d="M0 0H7L3.5 4Z" fill="#000"/></svg>

<div class="a grp" style="left:471px;top:218px;width:150px;height:79px"></div>
<div class="a dt gt" style="left:479px;top:210px">中心位移</div>
<div class="a dt dis" style="left:478px;top:235px">水平(I):</div>
<div class="a sp dsb" style="left:537px;top:231px;width:56px;height:23px"><b class="a sbu"></b><b class="a sbd"></b></div>
<div class="a dt dis" style="left:541px;top:233px">0</div>
<div class="a dt dis" style="left:597px;top:236px">%</div>
<div class="a dt dis" style="left:478px;top:265px">垂直(V):</div>
<div class="a sp dsb" style="left:537px;top:261px;width:56px;height:23px"><b class="a sbu"></b><b class="a sbd"></b></div>
<div class="a dt dis" style="left:541px;top:263px">0</div>
<div class="a dt dis" style="left:597px;top:266px">%</div>

<div class="a grp" style="left:630px;top:186px;width:173px;height:111px"></div>
<div class="a dt gt" style="left:635px;top:178px">选项</div>
<div class="a dt" style="left:634px;top:205px">角度(A):</div>
<div class="a sp" style="left:712px;top:200px;width:64px;height:23px"><b class="a sbu"></b><b class="a sbd"></b></div>
<div class="a dt" style="left:715px;top:203px">0</div>
<div class="a" style="left:723px;top:204px;width:1px;height:13px;background:#000"></div>
<div class="a dt dis" style="left:634px;top:234px">步长(S):</div>
<div class="a sp dsb" style="left:712px;top:229px;width:64px;height:23px"><b class="a sbu"></b><b class="a sbd"></b></div>
<div class="a dt dis" style="left:716px;top:232px">256</div>
<div class="a" style="left:782px;top:232px;width:19px;height:18px;border:1px solid #8a8a8a;border-radius:3px;background:linear-gradient(#fafafa,#dcdcdc)"></div>
<svg class="a" style="left:786px;top:235px" width="11" height="11" viewBox="0 0 11 11"><path d="M2.5 5V3.5Q2.5 1 5 1Q7.5 1 7.5 3" fill="none" stroke="#2a2a5a" stroke-width="1.5"/><rect x="1" y="5" width="9" height="6" fill="#3a3a78"/><rect x="4.5" y="7" width="2" height="2" fill="#fff"/></svg>
<div class="a dt" style="left:634px;top:264px">边界(E):</div>
<div class="a sp" style="left:712px;top:260px;width:64px;height:23px"><b class="a sbu"></b><b class="a sbd"></b></div>
<div class="a dt" style="left:715px;top:262px">0</div>
<div class="a dt" style="left:783px;top:266px;font-size:13px">%</div>

<div class="a" style="left:814px;top:183px;width:78px;height:87px;background:#fff;border-right:1px solid #404040;border-bottom:1px solid #404040;box-shadow:1px 1px 0 #a0a0a0"></div>
<div class="a" style="left:816px;top:185px;width:74px;height:81px;border:1px solid #000;background:linear-gradient(90deg,#2e2e2e,#505454 25%,#8c8f92 55%,#cfd0d2 80%,#fff)"></div>

<div class="a grp" style="left:471px;top:311px;width:420px;height:146px"></div>
<div class="a dt gt" style="left:478px;top:304px">颜色调和</div>
<div class="a radio on" style="left:479px;top:327px"></div>
<div class="a dt" style="left:494px;top:324px">双色(W)</div>
<div class="a radio" style="left:588px;top:327px"></div>
<div class="a dt" style="left:604px;top:324px">自定义(C)</div>
<div class="a dt" style="left:476px;top:355px">从(F):</div>
<div class="a cbtn" style="left:533px;top:351px"><i class="a" style="left:2px;top:2px;width:17px;height:15px;background:#231f1c"></i></div>
<div class="a dt" style="left:476px;top:385px">到(O):</div>
<div class="a cbtn" style="left:533px;top:383px"><i class="a" style="left:2px;top:2px;width:17px;height:15px;background:#fff"></i></div>
<div class="a dt" style="left:476px;top:417px">中点(M):</div>
<div class="a" style="left:543px;top:417px;width:67px;height:3px;border-top:1px solid #a0a0a0;border-bottom:1px solid #fff;background:#e0e0e0"></div>
<svg class="a" style="left:573px;top:413px" width="10" height="13" viewBox="0 0 10 13"><path d="M1.5 1.5H8.5V9L5 12L1.5 9Z" fill="url(#thg)" stroke="#707070"/><defs><linearGradient id="thg"><stop offset="0" stop-color="#fff"/><stop offset="1" stop-color="#d0d0d0"/></linearGradient></defs></svg>
<svg class="a" style="left:545px;top:429px" width="64" height="4"><path d="M1.5 0V3M16.5 0V3M31.5 0V3M46.5 0V3M61.5 0V3" stroke="#a0a0a0"/></svg>
<div class="a" style="left:622px;top:413px;width:27px;height:19px;background:#fff;border:1px solid #c8c8c8"></div>
<div class="a dt" style="left:626px;top:415px">50</div>
<div class="a ibt sel" style="left:676px;top:352px"></div>
<svg class="a" style="left:681px;top:356px" width="13" height="13" viewBox="0 0 13 13"><path d="M2.5 10.5L10.5 2.5" stroke="#4a6a88"/><rect x="1.5" y="9.5" width="2" height="2" fill="#e8f4fc" stroke="#304a60"/><rect x="9.5" y="1.5" width="2" height="2" fill="#e8f4fc" stroke="#304a60"/></svg>
<div class="a ibt" style="left:676px;top:378px"></div>
<svg class="a" style="left:680px;top:381px" width="14" height="15" viewBox="0 0 14 15"><path d="M4 1.5H10.5M5 1.5V6.5Q9 5.5 10.5 8Q12 11 9.5 13Q7 14.5 4.5 13" fill="none" stroke="#4a4a52" stroke-width="2"/><path d="M1.5 11L6 10.5L5 14.5Z" fill="#4a4a52"/></svg>
<div class="a ibt" style="left:676px;top:404px"></div>
<svg class="a" style="left:680px;top:407px" width="14" height="15" viewBox="0 0 14 15"><path d="M8.5 4Q4.5 4 4 8Q4 12.5 8 12.5Q10.5 12.5 11 11" fill="none" stroke="#4a4a52" stroke-width="2"/><path d="M6.5 1.5L12 2L9 6.5Z" fill="#4a4a52"/><path d="M6 3.5L8 3" stroke="#4a4a52" stroke-width="2"/></svg>
<div class="a" style="left:751px;top:328px;width:113px;height:113px;border-radius:50%;background:conic-gradient(from 0deg,#30a840 0deg,#a8d820 18deg,#f0f010 32deg,#f8a020 60deg,#f03c10 88deg,#f04058 115deg,#d83078 150deg,#802890 180deg,#3a2a90 205deg,#283898 228deg,#1890d8 252deg,#10a8d8 272deg,#10a890 295deg,#10a048 320deg,#20a040 350deg,#30a840 360deg)"></div>
<div class="a" style="left:751px;top:328px;width:113px;height:113px;border-radius:50%;background:radial-gradient(circle at 50% 50%,#fff 0,rgba(255,255,255,.8) 6%,rgba(255,255,255,.35) 30%,rgba(255,255,255,.08) 55%,rgba(255,255,255,0) 75%)"></div>

<div class="a dt" style="left:471px;top:474px">预设(R):</div>
<div class="a" style="left:534px;top:471px;width:138px;height:20px;background:#fff;border:1px solid #d8d8d8;border-top-color:#c0c0c0"></div>
<svg class="a" style="left:660px;top:480px" width="8" height="5"><path d="M0 0H7L3.5 4Z" fill="#000"/></svg>
<div class="a wbtn" style="left:679px;top:472px;width:19px;height:18px"></div>
<svg class="a" style="left:683px;top:476px" width="10" height="10" viewBox="0 0 10 10"><path d="M5 0.5V9.5M0.5 5H9.5" stroke="#4a4a60" stroke-width="3"/></svg>
<div class="a wbtn" style="left:700px;top:472px;width:19px;height:18px"></div>
<svg class="a" style="left:704px;top:476px" width="11" height="10" viewBox="0 0 11 10"><path d="M0.5 5H10.5" stroke="#4a4a60" stroke-width="3"/></svg>
<div class="a" style="left:750px;top:469px;width:141px;height:21px;border:1px solid #c4c4c4;border-radius:3px;background:#f4f4f4"></div>
<div class="a dt dis" style="left:750px;top:472px;width:141px;text-align:center;letter-spacing:-0.45px">PostScript 选项(P)...</div>
<div class="a" style="left:658px;top:503px;width:73px;height:21px;border:1px solid #3c8cc0;border-radius:3px;background:linear-gradient(#e6f4fc,#c4e6f8 50%,#a8daf4 51%,#98d2f0);box-shadow:inset 0 0 0 1px #7fd0f4"></div>
<div class="a dt" style="left:658px;top:507px;width:73px;text-align:center">确定</div>
<div class="a wbtn" style="left:738px;top:503px;width:73px;height:21px"></div>
<div class="a dt" style="left:738px;top:507px;width:73px;text-align:center">取消</div>
<div class="a wbtn" style="left:819px;top:503px;width:73px;height:21px"></div>
<div class="a dt" style="left:819px;top:507px;width:73px;text-align:center">帮助(H)</div>

<svg class="a" style="left:0;top:0;z-index:50" width="968" height="670"><path d="M436.5 157.5H615.5V207H436.5Z M646.5 182.5H805V311H646.5Z" fill="none" stroke="#ec3434" stroke-width="3"/><polygon points="378.0,132.8 452.2,168.8 452.1,164.7 462.5,179.2 444.7,178.4 448.2,176.2 377.4,133.8" fill="#ef3535"/><polygon points="587.7,148.9 661.8,194.6 661.7,190.4 672.7,207.9 652.4,203.9 656.4,202.5 587.1,149.9" fill="#ef3535"/><polygon points="319.6,212.4 355.5,264.4 357.6,259.6 360.4,281.3 342.5,268.7 347.8,269.1 318.6,213.0" fill="#ef3535"/></svg>
</body></html>
